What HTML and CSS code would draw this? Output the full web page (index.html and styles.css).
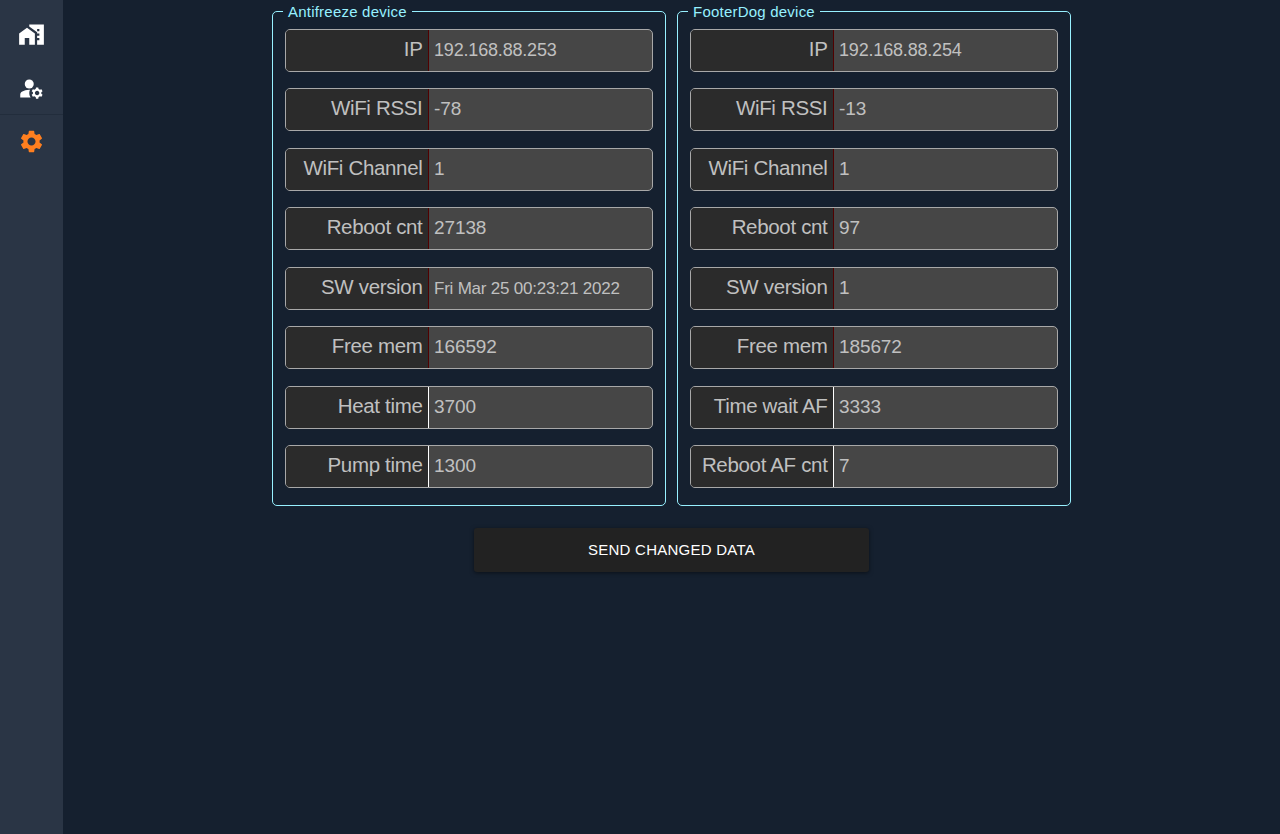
FILE: index.html
```html
<!DOCTYPE html>
<html lang="en">
<head>
<meta charset="utf-8">
<title>Devices</title>
<link rel="stylesheet" href="styles.css">
</head>
<body>
<nav class="sidebar">
  <a class="nav-item"><svg viewBox="0 0 24 24"><path d="M1 11v10h5v-6h4v6h5V11L8 6z"/><path d="M10 3v1.97l7 5V11h2v2h-2v2h2v2h-2v4h6V3H10zm9 6h-2V7h2v2z"/></svg></a>
  <a class="nav-item user"><svg viewBox="0 0 24 24"><circle cx="10" cy="8" r="4"/><path d="M10.67 13.02C10.45 13.01 10.23 13 10 13c-2.42 0-4.68.67-6.61 1.82-.88.52-1.39 1.5-1.39 2.53V20h9.26c-.79-1.13-1.26-2.51-1.26-4 0-1.07.25-2.07.67-2.98z"/><path d="M20.75 16c0-.22-.03-.42-.06-.63l1.14-1.01-1-1.73-1.45.49c-.32-.27-.68-.48-1.08-.63L18 11h-2l-.3 1.49c-.4.15-.76.36-1.08.63l-1.45-.49-1 1.73 1.14 1.01c-.03.21-.06.41-.06.63s.03.42.06.63l-1.14 1.01 1 1.73 1.45-.49c.32.27.68.48 1.08.63L16 21h2l.3-1.49c.4-.15.76-.36 1.08-.63l1.45.49 1-1.73-1.14-1.01c.03-.21.06-.41.06-.63zM17 18c-1.1 0-2-.9-2-2s.9-2 2-2 2 .9 2 2-.9 2-2 2z"/></svg></a>
  <a class="nav-item active"><svg viewBox="0 0 24 24"><path d="M19.14 12.94c.04-.3.06-.61.06-.94 0-.32-.02-.64-.07-.94l2.03-1.58c.18-.14.23-.41.12-.61l-1.92-3.32c-.12-.22-.37-.29-.59-.22l-2.39.96c-.5-.38-1.03-.7-1.62-.94l-.36-2.54c-.04-.24-.24-.41-.48-.41h-3.84c-.24 0-.43.17-.47.41l-.36 2.54c-.59.24-1.13.57-1.62.94l-2.39-.96c-.22-.08-.47 0-.59.22L2.74 8.87c-.12.21-.08.47.12.61l2.03 1.58c-.05.3-.09.63-.09.94s.02.64.07.94l-2.03 1.58c-.18.14-.23.41-.12.61l1.92 3.32c.12.22.37.29.59.22l2.39-.96c.5.38 1.03.7 1.62.94l.36 2.54c.05.24.24.41.48.41h3.84c.24 0 .44-.17.47-.41l.36-2.54c.59-.24 1.13-.56 1.62-.94l2.39.96c.22.08.47 0 .59-.22l1.92-3.32c.12-.22.07-.47-.12-.61l-2.01-1.58zM12 15.6c-1.98 0-3.6-1.62-3.6-3.6s1.62-3.6 3.6-3.6 3.6 1.62 3.6 3.6-1.62 3.6-3.6 3.6z"/></svg></a>
</nav>
<main class="content">
  <div class="devices">
    <fieldset class="device">
      <legend>Antifreeze device</legend>
      <div class="field"><label>IP</label><span class="value address">192.168.88.253</span></div>
      <div class="field"><label>WiFi RSSI</label><span class="value">-78</span></div>
      <div class="field"><label>WiFi Channel</label><span class="value">1</span></div>
      <div class="field"><label>Reboot cnt</label><span class="value">27138</span></div>
      <div class="field"><label>SW version</label><span class="value date">Fri Mar 25 00:23:21 2022</span></div>
      <div class="field"><label>Free mem</label><span class="value">166592</span></div>
      <div class="field editable"><label>Heat time</label><span class="value">3700</span></div>
      <div class="field editable"><label>Pump time</label><span class="value">1300</span></div>
    </fieldset>
    <fieldset class="device">
      <legend>FooterDog device</legend>
      <div class="field"><label>IP</label><span class="value address">192.168.88.254</span></div>
      <div class="field"><label>WiFi RSSI</label><span class="value">-13</span></div>
      <div class="field"><label>WiFi Channel</label><span class="value">1</span></div>
      <div class="field"><label>Reboot cnt</label><span class="value">97</span></div>
      <div class="field"><label>SW version</label><span class="value">1</span></div>
      <div class="field"><label>Free mem</label><span class="value">185672</span></div>
      <div class="field editable"><label>Time wait AF</label><span class="value">3333</span></div>
      <div class="field editable"><label>Reboot AF cnt</label><span class="value">7</span></div>
    </fieldset>
  </div>
  <button class="send">SEND CHANGED DATA</button>
</main>
</body>
</html>
```
FILE: styles.css
```css
* { box-sizing: border-box; }
body {
  margin: 0;
  display: flex;
  height: 100vh;
  background: #15202f;
  font-family: "Liberation Sans", Arial, sans-serif;
}
.sidebar {
  width: 63px;
  padding-top: 8px;
  background: #2a3545;
}
.nav-item {
  display: flex;
  align-items: center;
  justify-content: center;
  height: 53px;
}
.nav-item.user { padding-top: 1px; }
.nav-item svg { width: 27px; height: 27px; fill: #fff; }
.nav-item.active { height: 54px; border-top: 1px solid #222d3c; }
.nav-item.active svg { fill: #ff7f1f; }
.content {
  flex: 1;
  display: flex;
  flex-direction: column;
  align-items: center;
  padding-top: 3px;
}
.devices { display: flex; gap: 11px; }
.device {
  width: 394px;
  height: 503px;
  margin: 0;
  padding: 9px 12px 0;
  border: 1px solid #97f0ff;
  border-radius: 5px;
}
.device legend {
  height: 17px;
  margin-left: -2px;
  padding: 0 5px;
  font-size: 15px;
  line-height: 17px;
  letter-spacing: .22px;
  color: #97f0ff;
}
.field {
  display: flex;
  height: 43px;
  margin-bottom: 16.47px;
  border: 1px solid #a8a8a8;
  border-radius: 5px;
  background: #464646;
  color: #c0c0c0;
  overflow: hidden;
}
.field label {
  width: 143px;
  padding-right: 5.5px;
  border-right: 1px solid #500000;
  background: #2b2b2b;
  font-size: 20.5px;
  line-height: 38px;
  letter-spacing: -.33px;
  text-align: right;
  white-space: nowrap;
}
.field.editable label { border-right-color: #fff; }
.value { padding-left: 5px; font-size: 19px; line-height: 40px; letter-spacing: -.1px; }
.value.address { font-size: 18px; letter-spacing: -.18px; }
.value.date { font-size: 17px; line-height: 41px; letter-spacing: -.22px; }
.send {
  width: 395px;
  height: 44px;
  margin-top: 22px;
  padding: 0 0 2px;
  border: 0;
  border-radius: 3px;
  background: #222;
  color: #fff;
  font-family: inherit;
  font-size: 15px;
  letter-spacing: .25px;
  box-shadow: 0 1px 4px rgba(0, 0, 0, .5);
}
```
